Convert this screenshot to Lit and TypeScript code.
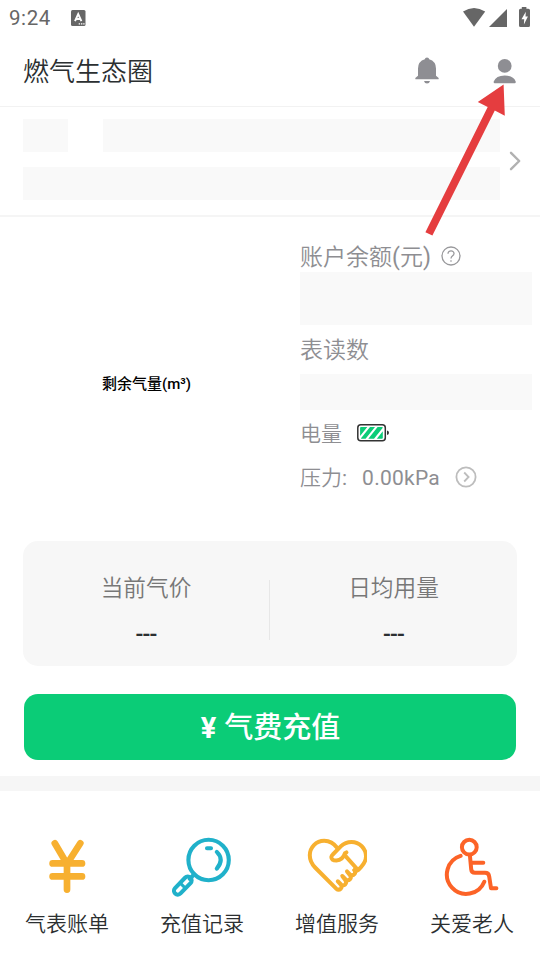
import { LitElement, html, css, svg } from "lit";
import { customElement } from "lit/decorators.js";

const yen = svg`<g fill="none" stroke="#f7b030" stroke-width="6.7" stroke-linecap="round" stroke-linejoin="round">
  <path d="M17.8 6.3 30 27 43.3 6.3M30 27V52.6M15.6 26.4H45M15.6 39.4H45"/></g>`;

const search = svg`<g fill="none" stroke="#20b1ca" stroke-width="4.1" stroke-linecap="round">
  <circle cx="36.6" cy="23" r="20.2"/>
  <path d="M35 11.3h4M44.8 14.9Q52.6 22.6 44.8 31.6M22.3 37.3l-4.6 4.6"/>
  <rect x="-11" y="-3.8" width="22" height="7.6" rx="3.8" transform="translate(10.8 48.6) rotate(-46)"/>
  <path d="M8.8 46.6l4 4" stroke-width="3"/></g>`;

const heart = svg`<g fill="none" stroke="#f7b030" stroke-width="4" stroke-linecap="round" stroke-linejoin="round">
  <path d="M30.6 11.2C26.5 5.8 22 3.8 17.2 3.8 9 3.8 2.8 10.3 2.8 18.3c0 4.8 2 8.8 5.3 12.2L29.2 51.7q2.4 2 4.6 0 1.8-2-.2-4.4l-2.8-3 3.3 3.2q2.2 1.6 4.1-.1 1.8-2 .1-4.2L35.3 39l3.6 3.7q2.2 1.4 4.1-.4 1.7-2 0-4.1L40 34.4l3.4 3.4q2.2 1.2 4-.7 1.6-1.9 0-4"/>
  <path d="M38 16.2Q35.8 23.2 29.4 23.6 24 23.6 24.4 19.8q.2-1.2 1.4-2.3L34 9.2Q38.3 5 44.5 5C52.6 5 59 11.5 59 19.3c0 4.6-2 7.6-5 10.8L51.2 33q-2 1.6-3.8.2M51 33 38.8 19.4M38 16.2l1.4-.8"/></g>`;

const care = svg`<g fill="none" stroke="#fc6327" stroke-width="4" stroke-linecap="round" stroke-linejoin="round">
  <circle cx="27.3" cy="10.2" r="7.4"/>
  <path d="M27.9 18.4l1.3 13.8q.3 3.5 3.8 3.5h10q3.7 0 4.2 3.7l1.8 11.9h5.4M28.7 25.8h12.6"/>
  <path d="M18.6 18.9A19.4 19.4 0 1 0 42.3 44.7"/></g>`;

const services = [
  { label: "气表账单", icon: yen },
  { label: "充值记录", icon: search },
  { label: "增值服务", icon: heart },
  { label: "关爱老人", icon: care },
];

@customElement("app-root")
export class AppRoot extends LitElement {
  static styles = css`
    :host {
      display: flex;
      flex-direction: column;
      position: relative;
      box-sizing: border-box;
      width: 540px;
      height: 960px;
      overflow: hidden;
      background: #fff;
      color: #2b2f31;
      font-family: "Noto Sans CJK SC", Roboto, sans-serif;
      font-weight: 350;
      white-space: nowrap;
    }
    svg { display: block; flex: none; }
    .status {
      display: flex;
      align-items: center;
      height: 37px;
      padding: 0 9px;
      color: #666;
      font: 400 20.5px/37px Roboto, sans-serif;
      letter-spacing: 0.6px;
    }
    .status .badge { margin-left: 20px; margin-top: -1px; }
    .status .signals { margin-left: auto; margin-top: -1px; }
    .header {
      display: flex;
      align-items: center;
      height: 69px;
      padding: 0 22px 0 23px;
      border-bottom: 1px solid #f2f2f2;
    }
    .title { flex: 1; font-size: 26px; line-height: 68px; margin-top: -3px; }
    .bell { margin-top: -2px; }
    .person { margin-left: 53px; margin-top: -2px; }
    .address {
      display: flex;
      align-items: center;
      height: 108px;
      padding-left: 23px;
      border-bottom: 2px solid #f5f5f5;
    }
    .lines { width: 477px; display: grid; gap: 15px; margin-top: -3px; }
    .pair { display: grid; grid-template-columns: 45px 1fr; gap: 35px; }
    .blank { height: 33px; background: #f9f9f9; }
    .chevron { margin-left: 8px; }
    .main { display: grid; grid-template-columns: 300px 232px; height: 324px; }
    .remain {
      padding: 155px 0 0 102px;
      color: #000;
      font: 500 15px/24px Roboto, "Noto Sans CJK SC", sans-serif;
    }
    .info { padding-top: 24px; color: #8e8e92; font-size: 23px; }
    .row { display: flex; align-items: center; line-height: 31px; height: 31px; }
    .row svg { margin-left: 10px; margin-top: -2px; }
    .latin { font-weight: 400; }
    .balance { font-family: Roboto, "Noto Sans CJK SC", sans-serif; }
    .balance > span { padding-top: 2px; }
    .tall { height: 53px; }
    .reading { margin-top: 8px; height: 41px; align-items: flex-start; }
    .short { height: 36px; }
    .power { margin-top: 7px; font-size: 21px; }
    .row.power svg { margin-left: 15px; margin-top: 0; }
    .pressure {
      margin-top: 15px;
      font-size: 21px;
      font-family: Roboto, "Noto Sans CJK SC", sans-serif;
    }
    .pressure .value { margin-left: 15px; letter-spacing: 0.25px; }
    .row.pressure svg { margin-left: 15px; margin-top: -3px; }
    .card {
      display: grid;
      grid-template-columns: 246px 1px 1fr;
      height: 125px;
      margin: 0 23px;
      border-radius: 15px;
      background: #f7f7f7;
      text-align: center;
    }
    .stat { padding-top: 29px; }
    .sep { height: 60px; margin-top: 39px; background: #e7e7e7; }
    .name { color: #777; font-size: 22.7px; line-height: 34px; }
    .dashes {
      margin-top: 14px;
      font: 500 23px/34px Roboto, sans-serif;
      letter-spacing: -0.8px;
      color: #2b2f31;
    }
    .pay {
      display: flex;
      align-items: center;
      justify-content: center;
      gap: 8px;
      flex: none;
      height: 66px;
      margin: 28px 24px 16px;
      border-radius: 14px;
      background: #0bcc77;
      color: #fff;
      font-size: 29px;
      font-weight: 500;
      line-height: 62px;
    }
    .pay span { margin-top: -5px; }
    .pay .sign { margin: 2px 0 0 1px; font: 700 29px/66px Roboto, sans-serif; }
    .band { height: 15px; background: #f6f6f6; flex: none; }
    .services { display: grid; grid-template-columns: repeat(4, 135px); padding-top: 46px; }
    .service {
      display: flex;
      flex-direction: column;
      align-items: center;
      width: 134px;
      gap: 10px;
      font-size: 21px;
      line-height: 30px;
    }
    .arrow { position: absolute; left: 420px; top: 80px; }
  `;

  render() {
    return html`
      <div class="status">
        <span>9:24</span>
        <svg class="badge" width="15" height="16" viewBox="0 0 15 16">
          <rect width="14.5" height="16" rx="1.5" fill="#666"/>
          <path d="M4 11.2 7.2 4l3.2 7.2M5.3 9h3.8" fill="none" stroke="#fff" stroke-width="1.9"/>
          <path d="M7.7 13.8h1.4M10 13.8h1.4M12.2 13.8h1.4" stroke="#fff" stroke-width="1.2"/>
        </svg>
        <svg class="signals" width="69" height="22" viewBox="0 0 69 22">
          <g fill="#666">
            <path d="M1 4.5Q12 -2.5 23.2 4.5L12 19.7Z"/>
            <path d="M27 20 45 2v18Z"/>
            <path d="M59.8 0h4.6v1.8h2q1.6 0 1.6 1.5v15.2q0 1.5-1.5 1.5h-8q-1.5 0-1.5-1.5V3.3q0-1.5 1.5-1.5h1.3Z"/>
          </g>
          <path d="M63.8 4.8 59.5 12.2h2.7l-.3 5.2 4-7.8h-2.4Z" fill="#fff"/>
        </svg>
      </div>
      <div class="header">
        <div class="title">燃气生态圈</div>
        <svg class="bell" width="24" height="27" viewBox="0 0 24 27" fill="#8e8e93">
          <path d="M12 .5q2 0 2.2 1.7Q21 4.3 21 11.5v7.2l2.4 2q.9 1.5-.6 1.6H1.2q-1.5-.1-.6-1.6l2.4-2v-7.2Q3 4.3 9.8 2.2 10 .5 12 .5ZM9 24h6q-.6 2.5-3 2.5T9 24Z"/>
        </svg>
        <svg class="person" width="26" height="26" viewBox="0 0 26 26" fill="#8e8e93">
          <circle cx="12.7" cy="7.9" r="6.9"/>
          <path d="M1.7 23.4Q4 17.4 12.7 17.4T23.7 23.4q.3 1.8-1 1.8h-20q-1.3 0-1-1.8Z"/>
        </svg>
      </div>
      <div class="address">
        <div class="lines">
          <div class="pair"><div class="blank"></div><div class="blank"></div></div>
          <div class="blank"></div>
        </div>
        <svg class="chevron" width="14" height="22" viewBox="0 0 14 22" fill="none" stroke="#b1b1b1" stroke-width="2.4" stroke-linecap="round" stroke-linejoin="round">
          <path d="m3 2.8 8.2 8.2L3 19.2"/>
        </svg>
      </div>
      <div class="main">
        <div class="remain">剩余气量(m³)</div>
        <div class="info">
          <div class="row balance">
            <span>账户余额<span class="latin">(</span>元<span class="latin">)</span></span>
            <svg width="20" height="20" viewBox="0 0 20 20" fill="none" stroke="#99999c" stroke-width="1.3">
              <circle cx="10" cy="10" r="9"/>
              <path d="M7 7.8C7 3.8 13.2 4 13 7.8 12.8 9.8 10 9.9 10 12.5M10 14.2v1.6"/>
            </svg>
          </div>
          <div class="blank tall"></div>
          <div class="row reading">表读数</div>
          <div class="blank short"></div>
          <div class="row power">
            <span>电量</span>
            <svg width="33" height="18" viewBox="0 0 33 18">
              <rect x=".8" y=".8" width="27.5" height="16" rx="3" fill="#fff" stroke="#333" stroke-width="1.5"/>
              <path d="M30 6.5q2 .4 2 2.3T30 11Z" fill="#333"/>
              <path d="M4 3h6.3L3.1 12V4Q3.1 3 4 3ZM13 3h5L8.6 14.7H4.2l-.2-.5ZM20.6 3H25q.8 0 .8.8L17 14.7h-5.7ZM25.8 7.2v6.5q0 1-1 1h-5Z" fill="#0bcc77"/>
            </svg>
          </div>
          <div class="row pressure">
            <span>压力<span class="latin">:</span></span><span class="value latin">0.00kPa</span>
            <svg width="22" height="22" viewBox="0 0 22 22" fill="none" stroke="#bdbdbd">
              <circle cx="11" cy="11" r="9.6" stroke-width="1.8"/>
              <path d="m9.2 6.5 4.4 4.5-4.4 4.5" stroke-width="1.8"/>
            </svg>
          </div>
        </div>
      </div>
      <div class="card">
        <div class="stat"><div class="name">当前气价</div><div class="dashes">---</div></div>
        <div class="sep"></div>
        <div class="stat"><div class="name">日均用量</div><div class="dashes">---</div></div>
      </div>
      <div class="pay"><span class="sign">¥</span><span>气费充值</span></div>
      <div class="band"></div>
      <div class="services">
        ${services.map(
          (s) => html`<div class="service">
            <svg width="60" height="60" viewBox="0 0 60 60">${s.icon}</svg>
            <span>${s.label}</span>
          </div>`
        )}
      </div>
      <svg class="arrow" width="90" height="160" viewBox="0 0 90 160">
        <path d="M83.6 4.5 57.8 22 67.7 27 5.4 152.3 12.4 155.4 74.8 30.6 84.8 35.7Z" fill="#e53d3f"/>
      </svg>
    `;
  }
}
